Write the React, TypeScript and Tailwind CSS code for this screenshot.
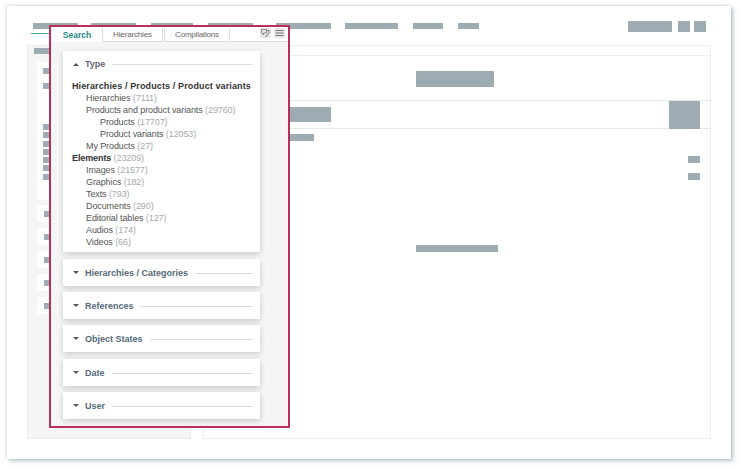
const font = { fontFamily: '"Liberation Sans", sans-serif' }

function Bar({ className }: { className: string }) {
  return <div className={`bg-[#9dacb2] ${className}`} />
}

function Section({ title, gap }: { title: string; gap?: string }) {
  return (
    <div className={`flex h-[27px] items-center bg-white pl-[10px] pr-[7px] shadow-[0_2px_6px_rgba(0,0,0,0.18)] ${gap ?? ''}`}>
      <span className="mr-[3px] h-0 w-0 border-x-[3px] border-t-[3px] border-x-transparent border-t-[#555]" />
      <span className="mx-[3px] mt-[2px] text-[9px] font-bold text-[#53697a]">{title}</span>
      <span className="ml-[4px] mt-[2px] h-px flex-1 bg-[#ddd]" />
    </div>
  )
}

function Item({ label, count, indent = 14 }: { label: string; count: string; indent?: number }) {
  return (
    <div className="h-[12px] text-[9px] leading-[12px] tracking-[-0.1px] text-[#555]" style={{ paddingLeft: indent }}>
      {label} <span className="text-[#aaa]">({count})</span>
    </div>
  )
}

function SearchPanel() {
  return (
    <div className="absolute left-[49px] top-[25px] flex h-[403px] w-[241px] flex-col border-2 border-[#b9305a] bg-[#f5f5f5]" style={font}>
      <div className="flex h-[15px] items-end bg-white pl-[1px]">
        <div className="flex h-[14px] w-[50px] items-center justify-center bg-white text-[8.5px] font-bold text-[#1f8a86]">Search</div>
        <div className="flex h-[14px] w-[61px] items-center justify-center border-x border-b border-[#ddd] text-[8px] tracking-[-0.15px] text-[#666]">Hierarchies</div>
        <div className="ml-[1px] flex h-[14px] w-[66px] items-center justify-center border-x border-b border-[#ddd] text-[8px] tracking-[-0.2px] text-[#666]">Compilations</div>
        <div className="flex h-[14px] flex-1 items-start justify-end gap-[3px] border-b border-[#ddd] pr-[3px]">
          <svg width="11" height="10" viewBox="0 0 11 10" className="bg-[#e8e8e8]" fill="none">
            <path d="M1.5 1.5h5v3.5h-3v2L1.5 5z" stroke="#888" />
            <path d="M6.5 2.5h2.5v2.5L7 7.5l-2 1" stroke="#777" />
          </svg>
          <svg width="11" height="10" viewBox="0 0 11 10" className="bg-[#e8e8e8]" stroke="#777">
            <path d="M1.5 2.5h8M1.5 5h8M1.5 7.5h8" />
          </svg>
        </div>
      </div>
      <div className="flex flex-col pl-[12px] pr-[28px] pt-[9px]">
        <div className="h-[201px] bg-white pl-[9px] shadow-[0_2px_6px_rgba(0,0,0,0.18)]">
          <div className="flex h-[27px] items-center pr-[7px]">
            <span className="ml-[1px] mr-[3px] h-0 w-0 border-x-[3px] border-b-[3px] border-x-transparent border-b-[#555]" />
            <span className="mx-[3px] text-[9px] font-bold text-[#667]">Type</span>
            <span className="ml-[4px] h-px flex-1 bg-[#ddd]" />
          </div>
          <div className="mt-[2px]">
            <div className="h-[12px] text-[9px] font-bold leading-[12px] tracking-[0.12px] text-[#333]">Hierarchies / Products / Product variants</div>
            <Item label="Hierarchies" count="7111" />
            <Item label="Products and product variants" count="29760" />
            <Item label="Products" count="17707" indent={28} />
            <Item label="Product variants" count="12053" indent={28} />
            <Item label="My Products" count="27" />
            <div className="h-[12px] text-[9px] leading-[12px] tracking-[-0.1px] text-[#aaa]">
              <span className="font-bold text-[#333]">Elements</span> (23209)
            </div>
            <Item label="Images" count="21577" />
            <Item label="Graphics" count="182" />
            <Item label="Texts" count="793" />
            <Item label="Documents" count="290" />
            <Item label="Editorial tables" count="127" />
            <Item label="Audios" count="174" />
            <Item label="Videos" count="66" />
          </div>
        </div>
        <Section title="Hierarchies / Categories" gap="mt-[7px]" />
        <Section title="References" gap="mt-[6px]" />
        <Section title="Object States" gap="mt-[6px]" />
        <Section title="Date" gap="mt-[7px]" />
        <Section title="User" gap="mt-[6px]" />
      </div>
    </div>
  )
}

function LeftPanel() {
  return (
    <div className="flex h-[394px] w-[164px] flex-col border border-[#eee] bg-[#f5f5f5] pl-[9px] pr-[6px] pt-[2px]">
      <Bar className="ml-[-3px] h-[6px] w-[18px]" />
      <div className="mt-[8px] flex h-[138px] flex-col bg-white pl-[6px] pt-[6px]">
        <Bar className="h-[6px] w-[10px]" />
        <Bar className="mt-[9px] h-[6px] w-[10px]" />
        <div className="mt-[35px] flex flex-col gap-[2.3px]">
          {[0, 1, 2, 3, 4, 5, 6].map((i) => (
            <Bar key={i} className="h-[6px] w-[10px]" />
          ))}
        </div>
      </div>
      <div className="mt-[5px] flex flex-col gap-[6px]">
        {[0, 1, 2, 3, 4].map((i) => (
          <div key={i} className="flex h-[17px] items-center bg-white pl-[7px]">
            <Bar className="h-[6px] w-[8px]" />
          </div>
        ))}
      </div>
    </div>
  )
}

function MainPanel() {
  return (
    <div className="ml-[12px] flex h-[394px] w-[508px] flex-col border border-[#eee] bg-white">
      <div className="h-[10px] border-b border-[#eee]" />
      <div className="mt-[15px] flex justify-center">
        <Bar className="ml-[-4px] h-[16px] w-[78px]" />
      </div>
      <div className="ml-[-1px] mt-[13px] flex h-[29px] items-center justify-between border-y border-[#e8e8e8] pl-[87px] pr-[10px]">
        <Bar className="h-[15px] w-[41px]" />
        <Bar className="h-[28px] w-[31px]" />
      </div>
      <Bar className="ml-[86px] mt-[5px] h-[7px] w-[24px]" />
      <Bar className="ml-[484px] mt-[15px] h-[7px] w-[12px]" />
      <Bar className="ml-[484px] mt-[10px] h-[7px] w-[12px]" />
      <Bar className="ml-[212px] mt-[65px] h-[7px] w-[82px]" />
    </div>
  )
}

export default function App() {
  return (
    <div className="relative h-[469px] w-[741px] overflow-hidden bg-white">
      <div className="ml-[7px] mt-[6px] h-[453px] w-[724px] bg-white pl-[20px] pt-[15px] shadow-[2px_2px_4px_rgba(120,145,155,0.55),-1px_-1px_3px_rgba(120,145,155,0.25)]">
        <div className="flex h-[24px] w-[680px] items-start">
          <div className="flex flex-col pt-[2px]">
            <div className="flex pl-[6px]">
              <Bar className="h-[6px] w-[45px]" />
              <Bar className="ml-[13px] h-[6px] w-[45px]" />
              <Bar className="ml-[15px] h-[6px] w-[42px]" />
              <Bar className="ml-[15px] h-[6px] w-[45px]" />
              <Bar className="ml-[23px] h-[6px] w-[55px]" />
              <Bar className="ml-[14px] h-[6px] w-[53px]" />
              <Bar className="ml-[15px] h-[6px] w-[30px]" />
              <Bar className="ml-[15px] h-[6px] w-[21px]" />
            </div>
            <div className="ml-[4px] mt-[4px] h-[1px] w-[30px] bg-[#4aa8a0]" />
          </div>
          <div className="ml-auto flex gap-[6px]">
            <Bar className="h-[11px] w-[44px]" />
            <Bar className="h-[11px] w-[12px]" />
            <Bar className="mr-[1px] ml-[-2px] h-[11px] w-[12px]" />
          </div>
        </div>
        <div className="flex">
          <LeftPanel />
          <MainPanel />
        </div>
      </div>
      <SearchPanel />
    </div>
  )
}
